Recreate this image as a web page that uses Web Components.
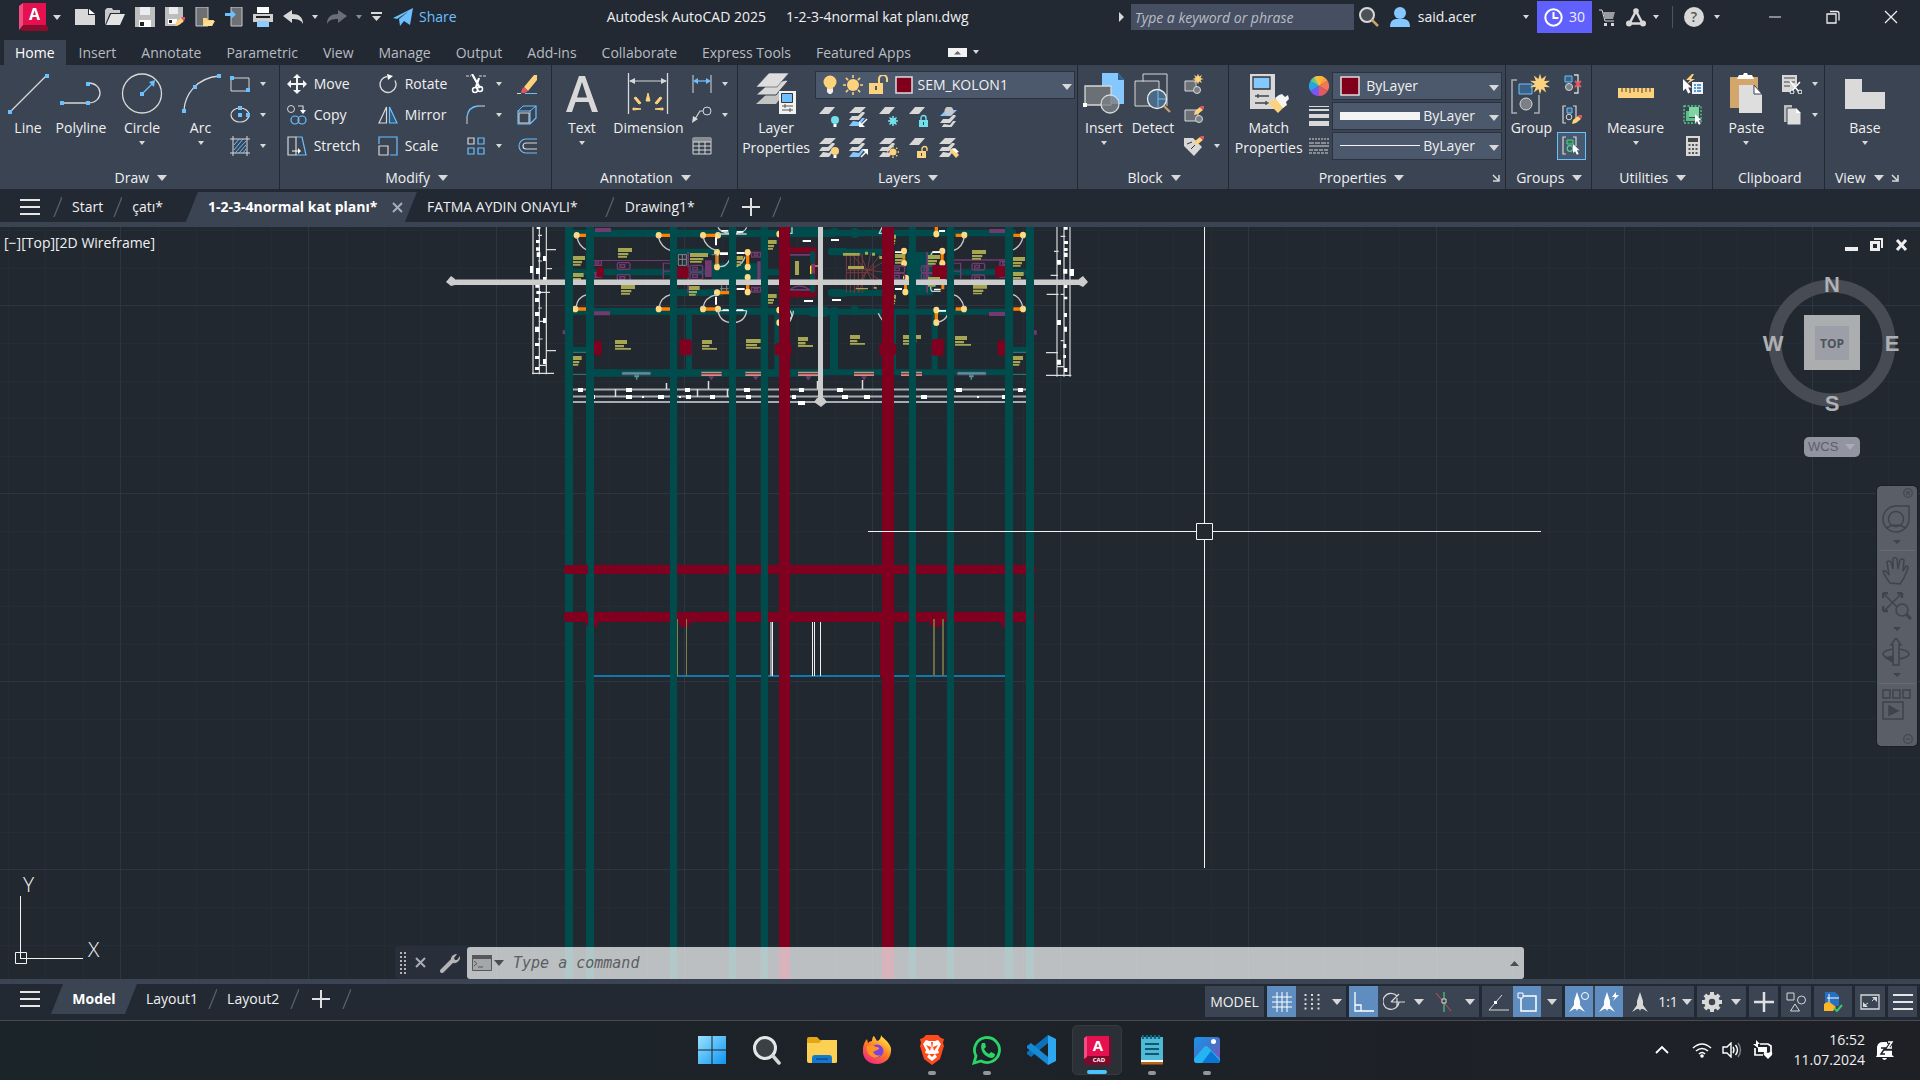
<!DOCTYPE html>
<html lang="en">
<head>
<meta charset="utf-8">
<title>Autodesk AutoCAD 2025</title>
<style>
html,body{margin:0;height:100%;background:#222933}
body{font:14px/20px "Open Sans","Noto Sans",sans-serif;color:#f0f0f0;overflow:hidden}
</style>
</head>
<body>
<cad-app></cad-app>
<script>
const W='#d8d8d8', B='#6cc0ff', Y='#fdd27c', R='#e8535d';

/* ---------- icon library: [width, height, markup] ---------- */
const sheet=(x,y,f)=>`<path d="M${x+6} ${y}h10l-6 7h-10z" fill="${f}"/>`;
const stack=(a=W,b=W,c=W)=>`<path d="M4 14l-4 5h10l6-8h-3l-3 4z" fill="${c}"/><path d="M3 8l-3 4h10l6-7-1-1h-2l-4 4z" fill="${b}" transform="translate(0 1)"/><path d="M6 0h11l-6 6H0z" fill="${a}"/>`;
const cursor=(x,y,s=1)=>`<path transform="translate(${x} ${y}) scale(${s})" d="M0 0v10l2.300-2 2 4 2-1-2-4h3z" fill="#fff"/>`;
const dot=(x,y)=>`<rect x="${x-2}" y="${y-2}" width="4" height="4" fill="${B}"/>`;
const pencil=(x,y)=>`<path transform="translate(${x} ${y})" d="M0 9l1-4 5-4 3 3-5 4z" fill="${Y}"/><path transform="translate(${x} ${y})" d="M6 1l1-1h3v2l-1 2z" fill="${R}"/>`;
const star=(cx,cy,r,n=8)=>{let p='';for(let i=0;i<n*2;i++){const a=Math.PI*i/n,q=i%2?r*.5:r;p+=(i?'L':'M')+(cx+q*Math.sin(a)).toFixed(1)+' '+(cy-q*Math.cos(a)).toFixed(1)}return `<path d="${p}z" fill="${Y}"/>`};
const rays=(cx,cy,a,b,n,c,w=1.500)=>{let p='';for(let i=0;i<n;i++){const t=2*Math.PI*i/n;p+=`M${(cx+a*Math.sin(t)).toFixed(1)} ${(cy-a*Math.cos(t)).toFixed(1)}L${(cx+b*Math.sin(t)).toFixed(1)} ${(cy-b*Math.cos(t)).toFixed(1)}`}return `<path d="${p}" stroke="${c}" stroke-width="${w}"/>`};
const lock=(x,y,c,open)=>`<g transform="translate(${x} ${y})"><path d="${open?'M5 5V3a2.500 2.500 0 0 1 5 0v2':'M2 5V3a2.500 2.500 0 0 1 5 0v2'}" fill="none" stroke="${c}" stroke-width="1.400"/><rect y="5" width="9" height="7" fill="${c}"/><rect x="4" y="7" width="1" height="3" fill="#3b4453"/></g>`;
const ICONS={
 logo:[30,28,`<path d="M1 3l4-3h23v22l2 2v4H5l-4-2z" fill="#8c0c2e"/><path d="M5 0h23v22H5z" fill="#e51050"/><path d="M1 3l4-3v22l-4 5z" fill="#f04e80"/><text x="16.500" y="17" text-anchor="middle" font-family="Open Sans" font-weight="700" font-size="16" fill="#fff">A</text>`],
 tri:[10,5,`<path d="M1 0h8L5 5z" fill="${W}"/>`],
 tris:[8,5,`<path d="M1 0h6L4 4z" fill="${W}"/>`],
 trid:[8,5,`<path d="M1 0h6L4 4z" fill="#888d94"/>`],
 trib:[10,6,`<path d="M0 0h10L5 6z" fill="${W}"/>`],
 trir:[6,10,`<path d="M0 0v10l5-5z" fill="${W}"/>`],
 launch:[8,8,`<path d="M1 1l5 5M7 1v6H1" stroke="${W}" stroke-width="1.500" fill="none"/>`],
 file:[20,18,`<path d="M0 1h13v6h7v10H0z" fill="${W}"/><path d="M14 1l6 5h-6z" fill="#fff"/>`],
 open:[20,18,`<path d="M0 17V2l2-2h5l1 2h7v3H5z" fill="#c8c8c8"/><path d="M6 6h14l-5 11H1z" fill="#e4e4e4"/>`],
 save:[20,20,`<path d="M0 0h20v20H0z" fill="#bdbdbd"/><path d="M5 0h10v8H5z" fill="#e9edf2"/><path d="M4 13h12v7H4z" fill="#fff"/><path d="M5 15h4v4H5z" fill="#222"/>`],
 saveas:[20,20,`<path d="M0 0h18v15l-6 4H0z" fill="#bdbdbd"/><path d="M4 0h9v7H4z" fill="#e9edf2"/><path d="M3 12h9v5H3z" fill="#fff"/><path d="M4 13h3v3H4z" fill="#222"/>${pencil(10,10)}`],
 mobopen:[20,20,`<path d="M1 0h12v19H1z" fill="#6d6f72" stroke="#c9c9c9"/><path d="M8 19v-8h4l1 2h6l-2 6z" fill="${Y}"/><path d="M8 19l3-5h9l-3 5z" fill="#ffdf96"/>`],
 mobsave:[18,20,`<path d="M6 0h11v19H6z" fill="#6d6f72" stroke="#c9c9c9"/><path d="M0 6h6V3l5 4.500-5 4.500V9H0z" fill="${B}"/>`],
 print:[20,20,`<path d="M4 0h12v6H4z" fill="#fff"/><path d="M0 7h20v8H0z" fill="#d0d0d0"/><path d="M3 9h14v2H3z" fill="#222"/><path d="M4 14h12v6H4z" fill="#8cccff"/>`],
 undo:[20,14,`<path d="M0 6l9-6v4c7 0 11 3 11 10-2-4-5-5-11-5v4z" fill="${W}"/>`],
 redo:[20,14,`<path d="M20 6l-9-6v4C4 4 0 7 0 14c2-4 5-5 11-5v4z" fill="#6a6f77"/>`],
 qmenu:[12,10,`<path d="M0 0h11v2H0zM1 4h9L5.500 9z" fill="${W}"/>`],
 share:[20,18,`<path d="M0 10L20 0l-3 17-6-4-4 5-1-7L16 3 4 11z" fill="${B}"/>`],
 search:[20,20,`<circle cx="8" cy="8" r="7" fill="#4c5158" stroke="${W}" stroke-width="2"/><path d="M13 13l6 6" stroke="#c9a26a" stroke-width="2.500"/>`],
 user:[20,20,`<circle cx="10" cy="6" r="6" fill="#84c8ff"/><path d="M0 20c0-6 3-8 7-8h6c4 0 7 2 7 8z" fill="#84c8ff"/>`],
 clock:[19,19,`<circle cx="9.500" cy="9.500" r="8.200" fill="none" stroke="#fff" stroke-width="2"/><path d="M9.500 4v6h5" fill="none" stroke="#fff" stroke-width="2"/>`],
 cart:[17,17,`<path d="M0 1h3l3 11h9" fill="none" stroke="${W}"/><path d="M4 3h12l-2 7H6z" fill="#9a9da1"/><path d="M5 14h3v3H5zM12 14h3v3h-3z" fill="${W}"/>`],
 delta:[20,19,`<path d="M10 3L3.500 15.500h13z" fill="none" stroke="${W}" stroke-width="2.500"/><circle cx="10" cy="3" r="2.800" fill="${W}"/><circle cx="3" cy="15.500" r="3" fill="${W}"/><circle cx="17" cy="15.500" r="3" fill="${W}"/>`],
 help:[20,20,`<circle cx="10" cy="10" r="10" fill="${W}"/><text x="10" y="15" text-anchor="middle" font-family="Open Sans" font-size="14" font-weight="600" fill="#555">?</text>`],
 min:[14,14,`<path d="M1 7h12" stroke="#eee"/>`],
 restore:[14,14,`<path d="M1 4h9v9H1z" fill="none" stroke="#eee" stroke-width="1.300"/><path d="M4 1.500h7q2 0 2 2v7" fill="none" stroke="#eee" stroke-width="1.300"/>`],
 close:[14,14,`<path d="M1 1l12 12M13 1L1 13" stroke="#eee" stroke-width="1.300"/>`],
 ribmin:[19,9,`<path d="M0 0h19v9H0z" fill="#f2f2f2"/><path d="M9.500 3l3.500 3.500H6z" fill="#666"/>`],
 line:[42,42,`<path d="M3 39L40 2" stroke="${W}" stroke-width="1.300"/>${dot(3,39)}${dot(40,3)}`],
 pline:[42,42,`<path d="M2 30h26c16 0 16-20 0-20" stroke="${W}" fill="none" stroke-width="1.300"/>${dot(2,30)}${dot(28,30)}${dot(28,11)}`],
 circle:[42,42,`<circle cx="21" cy="20.500" r="19.500" fill="none" stroke="${W}" stroke-width="1.300"/><path d="M21 21L33 9" stroke="${B}" stroke-width="1.300"/><path d="M34 7l-1 7-5-5z" fill="${B}"/>${dot(21,21)}`],
 arc:[42,42,`<path d="M4 37C5 22 16 5 39 3" fill="none" stroke="${W}" stroke-width="1.300"/>${dot(4,38)}${dot(15,14)}${dot(39,3)}`],
 rect:[20,20,`<path d="M1 4h18v13H1z" fill="none" stroke="${W}"/>${dot(2,4)}${dot(18,16)}`],
 ellipse:[20,20,`<ellipse cx="10" cy="10" rx="9" ry="7" fill="none" stroke="${W}" stroke-width="1.200"/>${dot(10,10)}${dot(10,3)}${dot(18,10)}`],
 hatch:[20,20,`<path d="M0 3h20M0 17h20M3 0v20M17 0v20" stroke="${W}"/><path d="M4 9l5-6M4 14l9-11M5 17L16 5M9 17l7-8M13 17l3-4" stroke="${B}"/>`],
 move:[20,20,`<path d="M10 0l4 4h-3v5h5V6l4 4-4 4v-3h-5v5h3l-4 4-4-4h3v-5H4v3l-4-4 4-4v3h5V4H6z" fill="#f4f4f4"/>`],
 copy:[20,20,`<circle cx="4" cy="4" r="3.500" fill="none" stroke="${W}"/><path d="M11 1h5v5" fill="none" stroke="${W}" stroke-width="1.200"/><path d="M13 5h6l-3 4z" fill="#fff"/><circle cx="8" cy="15" r="4" fill="none" stroke="${B}" stroke-width="1.200"/><circle cx="15" cy="15" r="4" fill="none" stroke="${B}" stroke-width="1.200"/>`],
 stretch:[20,20,`<path d="M1 1h8v18H1z" fill="none" stroke="${W}" stroke-width="1.200"/><path d="M9 1h6l4 18H9" fill="none" stroke="${B}" stroke-width="1.200"/><path d="M5 15h8" stroke="#fff"/><path d="M11 12l3 3-3 3z" fill="#fff"/>`],
 rotate:[20,20,`<path d="M9 2.500a8 8 0 1 0 8 4" fill="none" stroke="${W}" stroke-width="1.400"/><path d="M9 0l6 2-5 4z" fill="#fff"/>`],
 mirror:[20,20,`<path d="M8.500 2v16H1z" fill="none" stroke="${W}" stroke-width="1.200"/><path d="M11.500 2v16H19z" fill="#315a7c" stroke="${B}" stroke-width="1.200"/>`],
 scale:[20,20,`<path d="M1 8V1h18v18h-7" fill="none" stroke="${B}" stroke-width="1.200"/><path d="M1 10h9v9H1z" fill="none" stroke="${W}" stroke-width="1.200"/>`],
 trim:[20,20,`<path d="M0 2h5M13 2h7" stroke="${W}" stroke-dasharray="3 1"/><path d="M6 0l8 14M13 4l-3 9" stroke="#fff" stroke-width="2.200"/><circle cx="9" cy="16" r="2.500" fill="none" stroke="#fff" stroke-width="1.500"/><circle cx="14" cy="15" r="2.500" fill="none" stroke="#fff" stroke-width="1.500"/>`],
 fillet:[20,20,`<path d="M1 19v-7M12 1h7" stroke="${W}"/><path d="M1 12Q2 2 12 1" fill="none" stroke="${B}" stroke-width="1.300"/>`],
 array:[20,20,`<path d="M2 2h6v6H2z" fill="none" stroke="${W}" stroke-width="1.200"/><path d="M12 2h6v6h-6zM2 12h6v6H2zM12 12h6v6h-6z" fill="none" stroke="${B}" stroke-width="1.200"/>`],
 erase:[20,20,`<path d="M0 19.500h4" stroke="${W}"/><path d="M8 19.500h12" stroke="${B}"/><path d="M20 1v5l-9 11-4-4L17 1z" fill="${Y}"/><path d="M7 13l4 4-3 2H4l1-4z" fill="${R}"/>`],
 explode:[20,20,`<path d="M1 6h12v13H1zM6 1h13v12l-6 6" fill="none" stroke="${B}" stroke-width="1.200"/><path d="M1 6l5-5M13 6l6-5" stroke="${B}"/><path d="M2 8h10v10H2z" fill="none" stroke="${W}"/>`],
 offset:[20,20,`<path d="M20 3H9a7 7 0 0 0 0 14h11" fill="none" stroke="${B}" stroke-width="1.100"/><path d="M20 7H9a3 3 0 0 0 0 6h11" fill="none" stroke="${W}" stroke-width="1.200"/>`],
 text:[42,42,`<path d="M5 39L18 3h6l13 36h-6l-3.500-10h-13L11 39zM16 24.500h10L21 9z" fill="${W}"/>`],
 dim:[42,42,`<path d="M1.500 0v41M40.500 0v41" stroke="${W}" stroke-width="1.300"/><path d="M3 8h36" stroke="${W}"/><path d="M2 8l6-3v6zM40 8l-6-3v6z" fill="${W}"/><path d="M19 28l2-8 2 8zM12 31l-5-6 2-1 5 6zM30 31l5-6-2-1-5 6zM6 37v-2l8 1zM36 37v-2l-8 1z" fill="${Y}" stroke="${Y}"/>`],
 dlin:[20,20,`<path d="M1 1v18M19 1v18" stroke="${W}"/><path d="M3 7h14" stroke="${B}" stroke-width="1.300"/><path d="M1 7l5-3v6zM19 7l-5-3v6z" fill="${B}"/>`],
 leader:[20,20,`<circle cx="15" cy="6" r="4" fill="none" stroke="${W}"/><path d="M11 6H8L3 14" fill="none" stroke="${W}" stroke-width="1.200"/><path d="M0 18l1-7 5 3z" fill="${W}"/>`],
 table:[20,20,`<path d="M1 2h18v16H1z" fill="none" stroke="${W}"/><path d="M1 2h18v4H1z" fill="#888d94"/><path d="M1 6h18M1 10h18M1 14h18M7 6v12M13 6v12" stroke="${W}"/>`],
 layerp:[42,42,`<path d="M12 21L1 31h20l6-8-2-4h-7z" fill="#c4c4c4"/><path d="M12 12L1 22h20l12-14-2-1z" fill="${W}" stroke="#3b4453"/><path d="M14 0h20L22 14H1z" fill="#dedede" stroke="#3b4453" stroke-width=".6"/><path d="M24 18h17v23H24z" fill="#f2f2f2"/><path d="M26.500 20.500h11v9h-11z" fill="${B}" stroke="#333"/><path d="M27 33h11M27 37h11M30 31v4M35 35v4" stroke="#555"/>`],
 l1:[20,20,`${sheet(0,0,W)}<circle cx="16" cy="13" r="4" fill="#71e0ea"/><path d="M14.500 17h3v3h-3z" fill="#fff"/>`],
 l2:[20,20,`${stack(W,W,'#84c8ff')}<path d="M18 12l-6 6" stroke="#fff" stroke-width="1.400"/><path d="M10 20v-6l6 6z" fill="#fff"/>`],
 l3:[20,20,`${sheet(0,0,W)}${rays(14,14,0,5,8,'#71e0ea')}<circle cx="14" cy="14" r="3" fill="none" stroke="#71e0ea"/>`],
 l4:[20,20,`${sheet(0,0,W)}${lock(10,8,'#71e0ea')}`],
 l5:[20,20,`<g transform="translate(1 3)">${stack('#84c8ff')}</g><circle cx="10" cy="4" r="4.500" fill="#c9c9c9"/>`],
 l6:[20,20,`${stack()}<circle cx="16" cy="13" r="4" fill="${Y}"/><path d="M14.500 17h3v3h-3z" fill="#fff"/>`],
 l7:[20,20,`${stack(W,W,'#84c8ff')}<path d="M12 19l6-6" stroke="#fff" stroke-width="1.400"/><path d="M19 11v6l-6-6z" fill="#fff"/>`],
 l8:[20,20,`${stack()}<circle cx="14" cy="14" r="3.500" fill="${Y}"/>${rays(14,14,4.500,6,8,Y)}`],
 l9:[20,20,`${sheet(0,0,W)}${lock(8,8,Y,1)}`],
 l10:[20,20,`${stack()}<path d="M10 12l4-2 6 7-3 3z" fill="${Y}"/><path d="M16 10l4 4-3 1-4-4z" fill="#fff"/>`],
 bulb:[14,20,`<circle cx="7" cy="7" r="6.500" fill="${Y}"/><path d="M4 11h6v3H4z" fill="${Y}"/><path d="M4 14h6v3l-2 2H6l-2-2z" fill="#f0f0f0"/>`],
 sun:[20,20,`<circle cx="10" cy="10" r="6" fill="${Y}"/>${rays(10,10,7,10,8,Y)}`],
 unlock:[20,20,`<path d="M10 9V4a4 4 0 0 1 8 0v3" fill="none" stroke="${Y}" stroke-width="2"/><path d="M0 8h14v11H0z" fill="${Y}"/><path d="M6 11h2v4H6z" fill="#4c586c"/>`],
 sw:[18,18,`<path d="M1 1h16v16H1z" fill="#80001c" stroke="#dcdcdc" stroke-width="1.500"/>`],
 swb:[20,20,`<path d="M1 1h18v18H1z" fill="#80001c" stroke="#dcdcdc" stroke-width="1.500"/>`],
 insert:[42,42,`<path d="M19 0h16l6 7v24H19z" fill="#84c8ff"/><path d="M35 0l6 7h-6z" fill="#2d6290"/><path d="M2 13h26v19H2z" fill="#6b6f76" stroke="${W}" stroke-width="1.300"/><path d="M0 30h4v4H0z" fill="#fff"/><circle cx="27" cy="31" r="9" fill="#7b8086cc" stroke="${W}" stroke-width="1.300"/>`],
 detect:[42,42,`<path d="M11 9V1h24v32" fill="none" stroke="${W}"/><path d="M3 8h24v25H3z" fill="#6b6f7660" stroke="${W}"/><circle cx="25" cy="26" r="9.500" fill="#4a6a85" stroke="#eee" stroke-width="1.300"/><path d="M26 17v17M26 26h8" stroke="${B}"/><path d="M32 33l6 6" stroke="#c9a26a" stroke-width="2.200"/>`],
 bnew:[20,20,`<path d="M1 7h11v10H1z" fill="#6b6f76" stroke="${W}"/><circle cx="13" cy="16" r="3.500" fill="#7b8086" stroke="${W}"/>${star(14,5,5.500)}`],
 bedit:[20,20,`<path d="M1 5h13v11H1z" fill="#6b6f76" stroke="${W}"/><circle cx="15" cy="14" r="3.500" fill="#7b8086" stroke="${W}"/>${pencil(10,1)}`],
 battr:[20,20,`<path d="M0 2h9l9 9-8 9L0 10z" fill="${W}"/><path d="M3 8l5-2M7 13l4-4" stroke="#333"/>${pencil(10,0)}`],
 match:[42,42,`<path d="M2 1h25v35H2z" fill="${W}"/><path d="M5 4h17v12H5z" fill="#84c8ff" stroke="#333" stroke-width="1.300"/><path d="M7 23h14M7 30h14M10 21v4M18 28v4" stroke="#444" stroke-width="1.300"/><path d="M20 30l9-5 7 9-6 6z" fill="${Y}"/><path d="M27 25l4-3 3-1 3 3 3-2 1 4-3 3 1 3-4 3z" fill="#f4f4f4"/>`],
 wheel:[20,20,`<path d="M10 10V0a10 10 0 0 1 8.700 5z" fill="#ff9a3d"/><path d="M10 10l8.700-5a10 10 0 0 1 0 10z" fill="#f2765a"/><path d="M10 10l8.700 5A10 10 0 0 1 10 20z" fill="#e05a60"/><path d="M10 10v10a10 10 0 0 1-8.700-5z" fill="#7b55f5"/><path d="M10 10l-8.700 5a10 10 0 0 1 0-10z" fill="#28a4e4"/><path d="M10 10L1.300 5A10 10 0 0 1 10 0z" fill="#5ccb8c"/><path d="M10 10L5 1.300A10 10 0 0 1 15 1.300z" fill="#fdbb3c"/>`],
 lwt:[20,20,`<path d="M0 0h20v1H0zM0 3h20v2H0zM0 8h20v4H0zM0 15h20v5H0z" fill="${W}"/>`],
 ltype:[20,20,`<path d="M0 3h20" stroke="${W}" stroke-dasharray="2 1"/><path d="M0 7h20" stroke="${W}" stroke-dasharray="5 1"/><path d="M0 10h20" stroke="${W}"/><path d="M0 14h20" stroke="${W}" stroke-dasharray="4 1"/><path d="M0 17h20" stroke="${W}" stroke-dasharray="3 1"/>`],
 lw:[80,8,`<path d="M0 0h80v8H0z" fill="#f4f4f4"/>`],
 lt:[80,2,`<path d="M0 0h80v1H0z" fill="#f4f4f4"/>`],
 group:[42,42,`<path d="M7 7H2v33h5M24 40h5V22" fill="none" stroke="#a9adb3" stroke-width="1.500"/><path d="M9 11h13v10H9z" fill="#3a6186" stroke="${B}"/><circle cx="16" cy="31" r="6" fill="#7b8086" stroke="${W}"/>${star(30,11,10.500,10)}`],
 ungroup:[20,20,`<path d="M3 2h7v6H3z" fill="#3a6186" stroke="${B}"/><circle cx="7" cy="13" r="3.500" fill="#7b8086" stroke="${W}"/><path d="M12 1h4v18h-4" fill="none" stroke="${W}" stroke-width="1.300"/><path d="M13 7l6 6M19 7l-6 6" stroke="${R}" stroke-width="2"/>`],
 gedit:[20,20,`<path d="M4 1H1v17h3M11 1h3v12" fill="none" stroke="${W}" stroke-width="1.200"/><path d="M5 3h5v5H5z" fill="#3a6186" stroke="${B}"/><circle cx="7" cy="12" r="2.800" fill="none" stroke="${W}"/>${pencil(10,10)}`],
 gsel:[20,20,`<path d="M5 1H2v17h3M12 1h3v9" fill="none" stroke="${W}" stroke-width="1.200"/><path d="M6 4h6v4H6z" fill="#2d7a50" stroke="#5ccb8c"/><circle cx="9" cy="12.500" r="2.800" fill="none" stroke="#5ccb8c" stroke-width="1.300"/>${cursor(12,8,.9)}`],
 measure:[42,42,`<path d="M3 15h36v10H3z" fill="${Y}"/><path d="M7 15v4M11 15v4M15 15v5M19 15v4M23 15v4M27 15v5M31 15v4M35 15v4" stroke="#4a4434"/>`],
 quick:[20,20,`<path d="M9 0L3 6h4L4 10l8-5H8l3-5z" fill="${Y}"/><path d="M9 8h11v12H9z" fill="#f2f2f2"/><path d="M11 11h2M14 11h4M11 14h2M14 14h4M11 17h2M14 17h4" stroke="#1f7fd0" stroke-width="1.300"/>${cursor(0,5,1.200)}`],
 qsel:[20,20,`<path d="M1 1h17v17H1z" fill="none" stroke="#5ccb8c" stroke-dasharray="2 1.500" stroke-width="1.300"/><path d="M6 2h10v10H6z" fill="#80d4a4"/><path d="M3 6h3v7h7v3H3z" fill="#5cbf88"/>${cursor(12,9,.9)}`],
 calc:[16,20,`<path d="M1 0h14v20H1z" fill="${W}"/><path d="M3 2h10v4H3z" fill="#444"/><path d="M3.500 9h9M3.500 13h9M3.500 17h9" stroke="#555" stroke-width="2" stroke-dasharray="2 1.500"/>`],
 paste:[42,42,`<path d="M5 4h28v31H5z" fill="#d3a66c"/><path d="M12 6l2-4h4l1-2h3l1 2h4l2 4z" fill="#fff"/><path d="M14 12h15l8 9v19H14z" fill="#dedede"/><path d="M29 12l8 9h-8z" fill="#fff" stroke="#3b4453"/>`],
 cutc:[20,20,`<path d="M0 1h15v10l-6 7H0z" fill="${W}"/><path d="M2 4h11M2 8h11M2 12h6" stroke="#444"/><path d="M8 7l9 11M18 8L9 18" stroke="#fff" stroke-width="1.500"/><circle cx="10" cy="18" r="2" fill="#3b4453" stroke="#fff"/><circle cx="18" cy="18" r="2" fill="#3b4453" stroke="#fff"/>`],
 copyc:[20,20,`<path d="M2 0h8v17H2z" fill="#bcbcbc"/><path d="M5 3h9l5 5v12H5z" fill="#dedede" stroke="#3b4453"/><path d="M14 3l5 5h-5z" fill="#fff"/>`],
 base:[42,42,`<path d="M1 6h17v13h23v17H1z" fill="#dadada"/>`],
 burger:[20,16,`<path d="M0 1h20M0 8h20M0 15h20" stroke="#e6e6e6" stroke-width="2"/>`],
 slash:[9,20,`<path d="M1 20L9 0" stroke="#56606e" stroke-width="1.300"/>`],
 plus:[18,18,`<path d="M9 0v18M0 9h18" stroke="#e0e0e0" stroke-width="2"/>`],
 x:[11,11,`<path d="M1 1l9 9M10 1l-9 9" stroke="#a8adb4" stroke-width="2"/>`],
 grip:[6,22,`<path d="M1 0v22M5 0v22" stroke="#b4b4b4" stroke-width="2" stroke-dasharray="2 2"/>`],
 wrench:[20,20,`<path d="M2 18L12 8" stroke="#b4b4b4" stroke-width="4" stroke-linecap="round"/><path d="M11 9c-1-5 2-8 6-8l-3 4 1 2h2l3-4c1 4-3 8-7 7z" fill="#b4b4b4"/>`],
 prompt:[20,16,`<path d="M.5.500h19v15H.5z" fill="#a4a6a8" stroke="#55585c"/><path d="M0 0h20v4H0z" fill="#55585c"/><path d="M2 6l3 2.500L2 11M6 12h5" stroke="#55585c" fill="none"/>`],
 tridark:[10,6,`<path d="M0 0h10L5 6z" fill="#4a4d51"/>`],
 updark:[9,5,`<path d="M0 5h9L4.500 0z" fill="#4a4d51"/>`],
 grid:[20,20,`<path d="M0 5h20M0 10h20M0 15h20M5 0v20M10 0v20M15 0v20" stroke="#fff"/>`],
 snap:[16,16,`<path d="M1.500 0v16M8 0v16M14.500 0v16" stroke="${W}" stroke-width="2" stroke-dasharray="2 2.500"/>`],
 ortho:[20,20,`<path d="M1 0v19h19M1 13h6v6" fill="none" stroke="#fff" stroke-width="1.300"/>`],
 polar:[22,20,`<path d="M14 4a8 8 0 1 0 2 6M8 10h14M8 10l8-8M14 6v8" fill="none" stroke="${W}" stroke-width="1.200"/>`],
 iso:[18,20,`<path d="M1 1l15 18" stroke="#c9545c"/><path d="M9 0v20" stroke="#4fae72" stroke-width="1.500"/><path d="M7 7h4v4H7z" fill="#3b4453" stroke="${W}"/>`],
 track:[22,20,`<path d="M15 3L2 18h20" fill="none" stroke="${W}"/><path d="M7 9h3v3H7z" fill="#fff"/>`],
 osnap:[20,20,`<path d="M3 4h16v15H4V4" fill="none" stroke="#fff" stroke-width="1.500"/><path d="M1 1h5v5H1z" fill="#5f8dc0" stroke="#fff"/>`],
 an1:[22,20,`<path d="M9 0l3 9v4l5 7-5-3h-2l-1 2-1-2H6l-5 3 5-7V9z" fill="#fff"/><circle cx="17" cy="4" r="3.500" fill="none" stroke="#fff"/>`],
 an2:[22,20,`<path d="M9 0l3 9v4l5 7-5-3h-2l-1 2-1-2H6l-5 3 5-7V9z" fill="#fff"/><path d="M18 0l-4 5h3l-2 4 6-6h-3z" fill="#fff"/>`],
 an3:[18,20,`<path d="M9 0l3 9v4l5 7-5-3h-2l-1 2-1-2H6l-5 3 5-7V9z" fill="${W}"/>`],
 gear:[20,20,`<circle cx="10" cy="10" r="5.500" fill="none" stroke="${W}" stroke-width="4.500"/>${rays(10,10,7,10,8,W,4)}`],
 cross:[20,20,`<path d="M10 0v20M0 10h20" stroke="#e0e0e0" stroke-width="2.500"/>`],
 shapes:[20,20,`<path d="M1 1h7v7H1zM9 12l4.500 7h-9z" fill="none" stroke="${W}"/><circle cx="15.500" cy="8" r="4" fill="none" stroke="${W}"/>`],
 perf:[20,20,`<path d="M2 0h10l4 4v10H2z" fill="#2570c0"/><path d="M4 6h12M6 2v8" stroke="#fff"/><path d="M1 12q5-4 8 0l4 3-3 4H1z" fill="#fcb824"/><path d="M11 16l3 3 5-6" fill="none" stroke="#3dc46c" stroke-width="2"/>`],
 full:[20,16,`<path d="M1 1h18v14H1z" fill="none" stroke="${W}" stroke-width="1.300"/><path d="M12 3h5v5zM3 13h5l-5-5z" fill="${W}"/><path d="M12 7l3-3M5 11l3-2" stroke="${W}"/>`],
 win:[30,30,`<defs><linearGradient id="w" x2="1" y2="1"><stop stop-color="#9be2ff"/><stop offset="1" stop-color="#0d95f0"/></linearGradient></defs><path d="M1 1h13.500v13.500H1zM15.500 1H29v13.500H15.500zM1 15.500h13.500V29H1zM15.500 15.500H29V29H15.500z" fill="url(#w)"/>`],
 tsearch:[30,30,`<circle cx="13" cy="13" r="10.500" fill="#3b4044" stroke="#e4e6e8" stroke-width="3"/><path d="M21 21l6 7" stroke="#d4d6d8" stroke-width="3.500" stroke-linecap="round"/>`],
 folder:[30,30,`<path d="M0 4q0-2 2-2h8l3 3h15v6H0z" fill="#e6a514"/><path d="M0 8h12l3-3h15v22q0 1-2 1H2q-2 0-2-2z" fill="#fcd053"/><path d="M5 28v-5q0-3 3-3h14q3 0 3 3v5z" fill="#1479cc"/><path d="M9 24h12" stroke="#0c4c94" stroke-width="1.500"/>`],
 fox:[30,30,`<defs><linearGradient id="f" x1=".8" x2=".2" y2="1"><stop stop-color="#fff04a"/><stop offset=".5" stop-color="#ff7a22"/><stop offset="1" stop-color="#f0208a"/></linearGradient></defs><path d="M19 0c1 3 8 6 10 13 1 9-5 16-14 16S0 23 1 14c0-4 2-8 4-10l1 4q2-2 4-2c0-2 1-5 2-5l3 5q4-1 4-6z" fill="url(#f)"/><circle cx="15" cy="16" r="6.500" fill="#7b42e0"/><path d="M5 11q6-2 9 1 4 0 3 2l-6 3q3 5 8 3c-6 6-16 0-14-9z" fill="#ff9226"/>`],
 brave:[30,30,`<path d="M9 0h12l3 3 3 1-1 4 1 3-4 13-8 6-8-6L3 11l1-3-1-4 3-1z" fill="#ff4a1c"/><path d="M9 5l3 1h6l3-1 3 4-3 6 1 3-4 1 2 3-5 4-5-4 2-3-4-1 1-3-3-6z" fill="#fff"/><path d="M9 10l5 2-1 4zM21 10l-5 2 1 4zM12 19l3 3 3-3zM14 7h2l-1 8z" fill="#ff4a1c"/>`],
 wa:[30,30,`<path d="M2 28l2-7a12.500 12.500 0 1 1 5 5z" fill="#1c2328" stroke="#2bd466" stroke-width="2.800"/><path d="M10 8h3l1 4-2 2q2 4 5 5l2-2 4 2q0 4-4 4C12 22 7 14 10 8z" fill="#2bd466"/>`],
 code:[30,30,`<path d="M21 0l8 4v22l-8 4z" fill="#2da8f0"/><path d="M21 0v8L4 22l-4-3v-2z" fill="#0a72b8"/><path d="M0 11l4-3 17 14v8L0 13z" fill="#1688d4"/>`],
 acad:[30,30,`<path d="M2 3l3-2h22l2 3v26H5l-3-3z" fill="#7e0a2b"/><path d="M5 1h22v20H5z" fill="#e51050"/><path d="M2 3l3-2v21l-3 2z" fill="#f04e80"/><text x="16" y="16" text-anchor="middle" font-family="Open Sans" font-weight="700" font-size="15" fill="#fff">A</text><text x="17" y="27" text-anchor="middle" font-family="Open Sans" font-weight="700" font-size="6" fill="#fff">CAD</text>`],
 note:[30,30,`<path d="M4 2h22v26H4z" fill="#4fb9d6"/><path d="M4 25h22v2H4z" fill="#fff"/><path d="M4 27h22v2.500H4z" fill="#b8641e"/><path d="M8 9h14M8 14h14M8 19h14" stroke="#0f5670" stroke-width="1.800"/><path d="M6 0v4M10 0v4M14 0v4M18 0v4M22 0v4" stroke="#0c6a88" stroke-width="2.200"/>`],
 photo:[30,30,`<defs><linearGradient id="p" x2="1" y2="1"><stop stop-color="#1296ea"/><stop offset=".6" stop-color="#4d6ec6"/><stop offset="1" stop-color="#8d4ab8"/></linearGradient></defs><rect x="2" y="2" width="26" height="26" rx="3" fill="url(#p)"/><path d="M2 24l10-12q2-2 4 0l12 12v1q0 3-3 3H5q-3 0-3-3z" fill="#24b4f4"/><path d="M10 28l9-12 9 10q-1 2-3 2z" fill="#0a76d4"/><circle cx="21.500" cy="6.500" r="2.500" fill="#fff"/>`],
 chev:[14,10,`<path d="M1 8l6-6 6 6" fill="none" stroke="#fff" stroke-width="1.800"/>`],
 wifi:[20,16,`<path d="M1 6q9-8 18 0M4 9q6-5 12 0M7 12q3-3 6 0" fill="none" stroke="#fff" stroke-width="1.600"/><circle cx="10" cy="14" r="1.800" fill="#fff"/>`],
 vol:[20,16,`<path d="M1 5h4l4-4v14l-4-4H1z" fill="none" stroke="#fff" stroke-width="1.400"/><path d="M11 5q2 3 0 6M13.500 3q4 5 0 10" fill="none" stroke="#fff" stroke-width="1.400"/><path d="M16 1q5 7 0 14" fill="none" stroke="#7b8085" stroke-width="1.400"/>`],
 batt:[22,20,`<path d="M8 4h8l3 2v6M3 8v7h8" fill="none" stroke="#fff" stroke-width="1.700"/><path d="M6 7h9v5H6z" fill="#fff"/><path d="M4 0v4H1l5 4V4h2z" fill="#fff"/><path d="M16 19l-4-4q-1-4 2-3l2 1 2-1q3-1 2 3z" fill="#fff"/>`],
 bell:[20,20,`<path d="M2 15V7q1-5 6-5h4q5 1 5 5v8l2 2H1z" fill="#fff"/><path d="M7 18h5q-1 2-2.500 2T7 18z" fill="#fff"/><path d="M6 8h4l-4 6h4" stroke="#1d2228" fill="none" stroke-width="1.500"/><path d="M12 2h5l-5 7h5" stroke="#1d2228" fill="none" stroke-width="3.500"/><path d="M13 2h4l-4 6h4" stroke="#fff" fill="none" stroke-width="1.500"/>`],
};

const define=(name,css,html)=>customElements.define(name,class extends HTMLElement{
  constructor(){super();this.attachShadow({mode:'open'})}
  connectedCallback(){
    if(this.shadowRoot.childNodes.length)return;
    const t=document.createElement('template');
    t.innerHTML=`<style>:host{display:block;box-sizing:border-box}*{box-sizing:border-box}button,input,select{font:inherit;color:inherit;background:none;border:0;padding:0;margin:0}button{white-space:nowrap}${css}</style>${typeof html==='function'?html(this):html}`;
    this.shadowRoot.append(t.content.cloneNode(true));
  }
});

define('cad-icon',`:host{display:inline-flex;flex:none}svg{display:block}`,el=>{
  const [w,h,m]=ICONS[el.getAttribute('name')];
  return `<svg width="${w}" height="${h}" viewBox="0 0 ${w} ${h}" fill="none" aria-hidden="true">${m}</svg>`;
});
const I=n=>`<cad-icon name="${n}"></cad-icon>`;
const btn=(n,label,c='')=>`<button class="${c}" aria-label="${label}">${I(n)}</button>`;

/* ---------- title bar ---------- */
define('title-bar',`:host{display:flex;align-items:center;height:34px;margin-bottom:6px}
.left,.right{display:flex;align-items:center}
.left{padding-left:18px}
.left button{display:flex;align-items:center;height:28px}
.more{margin-left:4px}
.q{display:flex;gap:10px;margin-left:13px;align-items:center}
.q .d{margin:0 -2px}
.share{gap:6px;color:#6cc0ff}
h1{flex:1;display:flex;justify-content:center;gap:20px;margin:0;font-size:14px;font-weight:400;white-space:nowrap}
.right button{display:flex;align-items:center;justify-content:center;height:32px}
input{width:223px;height:26px;margin:0 5px 0 6px;padding:0 4px;background:#464f62;font-style:italic;outline:0}
input::placeholder{color:#b9bdc4;opacity:1}
.user{gap:8px;margin-left:11px}
.acct{margin-left:46px}
.days{gap:6px;width:55px;background:#6060ff;margin:0 7px}
.apps{margin:0 6px 0 10px}
.sep{width:1px;height:22px;background:#4b535e;margin:0 11px 0 12px}
.hl{margin:0 25px 0 9px}
.w{width:58px}`,
`<div class="left">${btn('logo','Application menu')}${btn('tri','More','more')}
<div class="q">${btn('file','New')}${btn('open','Open')}${btn('save','Save')}${btn('saveas','Save as')}${btn('mobopen','Open from mobile')}${btn('mobsave','Save to mobile')}${btn('print','Plot')}${btn('undo','Undo')}${btn('tris','Undo list','d')}${btn('redo','Redo')}${btn('trid','Redo list','d')}${btn('qmenu','Customize')}<button class="share">${I('share')}Share</button></div></div>
<h1><span>Autodesk AutoCAD 2025</span><span>1-2-3-4normal kat planı.dwg</span></h1>
<div class="right">${btn('trir','Collapse')}<input aria-label="Search" placeholder="Type a keyword or phrase">${btn('search','Search')}<button class="user">${I('user')}said.acer</button>${btn('tris','Account','acct')}<button class="days">${I('clock')}30</button>${btn('cart','Store')}${btn('delta','Apps','apps')}${btn('tris','Apps list')}<span class="sep"></span>${btn('help','Help')}${btn('tris','Help list','hl')}${btn('min','Minimize','w')}${btn('restore','Restore','w')}${btn('close','Close','w')}</div>`);

/* ---------- ribbon tabs ---------- */
define('ribbon-tabs',`:host{display:flex;align-items:center;height:25px;padding-left:4px;gap:1px}
button{height:25px;padding:0 12px;color:#b8bcc2}
.on{background:#3b4453;color:#fff;padding:0 11px}
.i{display:flex;align-items:center;padding:0;margin-left:24px}.i+.i{margin-left:4px}`,
['Home','Insert','Annotate','Parametric','View','Manage','Output','Add-ins','Collaborate','Express Tools','Featured Apps'].map((t,i)=>`<button${i?'':' class="on"'}>${t}</button>`).join('')+btn('ribmin','Minimize ribbon','i')+btn('tris','Ribbon list','i'));

/* ---------- ribbon parts ---------- */
define('ribbon-panel',`:host{display:flex;flex-direction:column;min-width:0;border-right:1px solid #222933}
:host(:last-of-type){border:0}
.b{flex:1;display:flex;min-height:0}
.t{display:flex;align-items:center;height:22px;white-space:nowrap}
.n{flex:1;display:flex;align-items:center;justify-content:center;gap:8px;padding-left:2px}
.l{display:flex;padding-right:5px}`,
el=>`<div class="b"><slot></slot></div><div class="t"><span class="n">${el.getAttribute('label')}${el.hasAttribute('plain')?'':I('trib')}</span>${el.hasAttribute('launch')?btn('launch','Settings','l'):''}</div>`);

define('tool-big',`:host{flex:none}
button{display:flex;flex-direction:column;align-items:center;width:100%;padding-top:8px;line-height:20px;white-space:nowrap;text-align:center}
.i{height:45px;display:flex}.a{height:10px;display:flex;align-items:center;justify-content:center}`,
el=>`<button><span class="i">${I(el.getAttribute('icon'))}</span><span><slot></slot></span>${el.hasAttribute('drop')?`<span class="a">${I('tris')}</span>`:''}</button>`);

define('tool-small',`:host{display:flex;align-items:center;height:30px}
button{display:flex;align-items:center;gap:7px;height:28px}
.d{margin-left:9px}
:host([on]) button{width:29px;justify-content:center;border:1px solid #6cc0ff;background:#46596e;margin-left:-5px}`,
el=>`<button aria-label="${el.getAttribute('tip')||el.textContent}">${I(el.getAttribute('icon'))}<slot></slot></button>${el.hasAttribute('drop')?btn('tris',(el.getAttribute('tip')||'')+' list','d'):''}`);

define('tool-col',`:host{display:flex;flex-direction:column;gap:1px;padding-top:4px;flex:none}`,`<slot></slot>`);

define('cad-combo',`:host{display:grid;align-items:center;height:28px;background:#4c586c;border:1px solid #2a323d}
select,.o{grid-area:1/1;width:100%;min-width:0}
select{appearance:none;height:26px;outline:0;padding-left:var(--pad,33px)}
.o{display:flex;align-items:center;pointer-events:none;gap:6px;padding:0 2px 0 7px}
.e{margin-left:auto}`,
el=>`<select aria-label="${el.getAttribute('tip')}"><option>${el.getAttribute('value')}</option></select><div class="o">${el.getAttribute('icons').split(' ').map(I).join('')}<span class="e">${I('trib')}</span></div>`);

const small=(icon,tip,extra='')=>`<tool-small icon="${icon}" tip="${tip}" ${extra}></tool-small>`;
define('cad-ribbon',`:host{display:flex;height:124px;background:#3b4453;padding-left:1px}
.lay{display:flex;flex-direction:column;padding-top:6px;width:260px}
.row{display:flex;gap:10px;padding-left:4px;height:31px;align-items:center}
.row:nth-child(2){margin-top:2px}
.pr{display:grid;grid-template-columns:20px 1fr;gap:2px 3px;padding:7px 3px 0 1px;flex:1;align-items:center;min-width:0;align-content:start}`,
`<ribbon-panel label="Draw" style="flex:279 1 0">
<tool-big icon="line" style="width:54px">Line</tool-big><tool-big icon="pline" style="width:52px">Polyline</tool-big><tool-big icon="circle" drop style="width:70px">Circle</tool-big><tool-big icon="arc" drop style="width:47px">Arc</tool-big>
<tool-col style="padding-left:6px">${small('rect','Rectangle','drop')}${small('ellipse','Ellipse','drop')}${small('hatch','Hatch','drop')}</tool-col></ribbon-panel>
<ribbon-panel label="Modify" style="flex:273 1 0">
<tool-col style="padding-left:7px;width:98px"><tool-small icon="move">Move</tool-small><tool-small icon="copy">Copy</tool-small><tool-small icon="stretch">Stretch</tool-small></tool-col>
<tool-col style="width:88px"><tool-small icon="rotate">Rotate</tool-small><tool-small icon="mirror">Mirror</tool-small><tool-small icon="scale">Scale</tool-small></tool-col>
<tool-col style="width:51px">${small('trim','Trim','drop')}${small('fillet','Fillet','drop')}${small('array','Array','drop')}</tool-col>
<tool-col>${small('erase','Erase')}${small('explode','Explode')}${small('offset','Offset')}</tool-col></ribbon-panel>
<ribbon-panel label="Annotation" style="flex:185 1 0">
<tool-big icon="text" drop style="width:59px">Text</tool-big><tool-big icon="dim" style="width:74px">Dimension</tool-big>
<tool-col style="padding-left:7px">${small('dlin','Linear','drop')}${small('leader','Leader','drop')}${small('table','Table')}</tool-col></ribbon-panel>
<ribbon-panel label="Layers" style="flex:341 1 0">
<tool-big icon="layerp" style="width:77px">Layer<br>Properties</tool-big>
<div class="lay"><cad-combo tip="Layer" value="SEM_KOLON1" icons="bulb sun unlock sw" style="--pad:102px"></cad-combo>
<div class="row">${[1,2,3,4,5].map(n=>small('l'+n,'Layer tool '+n)).join('')}</div><div class="row">${[6,7,8,9,10].map(n=>small('l'+n,'Layer tool '+n)).join('')}</div></div></ribbon-panel>
<ribbon-panel label="Block" style="flex:151 1 0">
<tool-big icon="insert" drop style="width:52px">Insert</tool-big><tool-big icon="detect" style="width:46px">Detect</tool-big>
<tool-col style="padding-left:8px">${small('bnew','Create')}${small('bedit','Edit')}${small('battr','Attributes','drop')}</tool-col></ribbon-panel>
<ribbon-panel label="Properties" launch style="flex:277 1 0">
<tool-big icon="match" style="width:79px">Match<br>Properties</tool-big>
<div class="pr">${I('wheel')}<cad-combo tip="Color" value="ByLayer" icons="swb"></cad-combo>${I('lwt')}<cad-combo tip="Lineweight" value="ByLayer" icons="lw" style="--pad:90px"></cad-combo>${I('ltype')}<cad-combo tip="Linetype" value="ByLayer" icons="lt" style="--pad:90px"></cad-combo></div></ribbon-panel>
<ribbon-panel label="Groups" style="flex:85 1 0">
<tool-big icon="group" style="width:51px">Group</tool-big>
<tool-col style="padding-left:5px">${small('ungroup','Ungroup')}${small('gedit','Group edit')}${small('gsel','Group selection','on')}</tool-col></ribbon-panel>
<ribbon-panel label="Utilities" style="flex:121 1 0">
<tool-big icon="measure" drop style="width:88px">Measure</tool-big>
<tool-col style="padding-left:3px">${small('quick','Quick select')}${small('qsel','Select all')}<tool-small icon="calc" tip="Calculator" style="padding-left:2px"></tool-small></tool-col></ribbon-panel>
<ribbon-panel label="Clipboard" plain style="flex:112 1 0">
<tool-big icon="paste" drop style="width:67px">Paste</tool-big>
<tool-col style="padding-left:2px">${small('cutc','Cut','drop')}${small('copyc','Copy clip','drop')}</tool-col></ribbon-panel>
<ribbon-panel label="View" launch style="flex:79 1 0"><tool-big icon="base" drop style="width:79px">Base</tool-big></ribbon-panel>
<div style="flex:16 1 0"></div>`);

/* ---------- slanted tabs ---------- */
const slant=`:host{display:flex;align-items:center}
button{display:flex;align-items:center;height:100%}
.on{font-weight:700;gap:15px;background:#3b4453;color:#fff;height:100%}`;
define('file-tabs',slant+`:host{height:33px;padding:3px 0 0 20px}
.on{clip-path:polygon(12px 0,100% 0,calc(100% - 12px) 100%,0 100%);width:231px;padding-left:22px;margin:0 10px 0 23px}
.a{margin:0 10px 0 13px}.b{margin:0 10px}.c{margin:0 11px 0 27px}.d{margin:0 13px 0 25px}.e{margin-left:12px}`,
`${btn('burger','Menu')}<cad-icon name="slash" class="a"></cad-icon><button>Start</button><cad-icon name="slash" class="b"></cad-icon><button>çatı*</button><button class="on">1-2-3-4normal kat planı*${I('x')}</button><button>FATMA AYDIN ONAYLI*</button><cad-icon name="slash" class="c"></cad-icon><button>Drawing1*</button><cad-icon name="slash" class="d"></cad-icon>${btn('plus','New tab')}<cad-icon name="slash" class="e"></cad-icon>`);

define('layout-tabs',slant+`:host{height:30px;padding-left:20px}
.on{clip-path:polygon(12px 0,100% 0,calc(100% - 12px) 100%,0 100%);width:86px;justify-content:center;margin:0 9px 0 11px}
.a{margin:0 10px}.b{margin:0 13px 0 11px}.c{margin-left:12px}`,
`${btn('burger','Menu')}<button class="on">Model</button><button>Layout1</button><cad-icon name="slash" class="a"></cad-icon><button>Layout2</button><cad-icon name="slash" class="b"></cad-icon>${btn('plus','New layout')}<cad-icon name="slash" class="c"></cad-icon>`);

/* ---------- model space drawing ---------- */
function drawing(){
  const T='#004c4c',C='#80001f',O='#a5a552',P='#743a70',D='#ffda83',G='#ff7f00';
  const rs=(c,l)=>`<path fill="${c}" d="${l.map(([x,y,w,h])=>`M${x} ${y}h${w}v${h}h${-w}z`).join('')}"/>`;
  const rr=(c,l)=>l.map(([x,y,w,h,r=6])=>`<rect x="${x}" y="${y}" width="${w}" height="${h}" rx="${r}" fill="${c}"/>`).join('');
  const dots=l=>l.map(([x,y])=>`<ellipse cx="${x}" cy="${y}" rx="9" ry="10" fill="${D}"/>`).join('');
  const door=l=>`<path d="${l.join('')}" fill="none" stroke="#c9c9c9" stroke-width="4"/>`;
  /* room label: three stacked lines of text, third one optionally longer */
  const note=l=>rs(O,l.flatMap(([x,y,w,w3])=>[[x,y,w,12],[x,y+15,w*.75|0,7],[x,y+24,w3||(w*.65|0),5]]));
  let minor='',major='';
  for(let k=-4;k<52;k++){const x=Math.round(120.400+37.600*k),y=Math.round(305.400+37.600*k);
    if(k%5){minor+=`M${x}.5 227V979`;if(y>227&&y<979)minor+=`M0 ${y}.5H1920`}
    else{major+=`M${x}.5 227V979`;if(y>227&&y<979)major+=`M0 ${y}.5H1920`}}
  const fixture=(x,y)=>`<g fill="none" stroke="${P}" stroke-width="4"><rect x="${x}" y="${y}" width="38" height="20" rx="5"/><rect x="${x+8}" y="${y+6}" width="14" height="8"/></g>`;
  const bath=(x,y)=>`<g fill="none" stroke="${P}" stroke-width="4"><rect x="${x}" y="${y}" width="26" height="14"/><rect x="${x+8}" y="${y+4}" width="10" height="6"/></g>`;
  const win=(x,w)=>rs('#e8847c',[[x,455,w,5],[x,463,w,5]])+rs(P,[[x+w/2-7|0,469,14,5],[x+w/2-3|0,474,6,5]]);
  const left=`<g transform="translate(440 220) scale(.33333)">
  ${rs(T,[[385,29,800,22],[385,148,660,18],[385,264,760,20],[462,448,690,22],[385,381,60,16],[710,86,130,18],[710,208,140,20],[738,280,18,170],[1003,280,18,170],[1170,280,22,170],[815,130,140,50],[1050,22,100,26]])}
  ${rr(T,[[1164,84,60,22,10],[1164,208,60,22,10],[1106,260,60,30,10]])}
  <path d="M399 397h45M399 463h45" stroke="#2d8583" stroke-width="3"/>
  ${rs(G,[[410,41,30,10],[660,41,32,10],[790,41,40,10],[826,100,10,42],[918,100,10,42],[918,175,10,40],[830,212,38,11],[410,262,30,10],[660,262,32,10],[790,262,40,10]])}
  ${dots([[410,46],[656,46],[789,46],[834,46],[831,97],[831,141],[923,97],[923,141],[923,172],[923,216],[831,218],[406,267],[656,267],[789,267],[834,267],[877,40],[877,270],[877,308],[1018,42],[1018,270],[1018,308]])}
  ${door(['M411 50Q415 78 440 90','M655 50Q662 82 692 92','M789 50Q796 82 830 92','M408 262Q412 232 440 224','M657 262Q662 232 692 224','M789 262Q794 232 830 224','M834 272Q840 308 877 308Q915 308 920 272M834 272h86','M834 22Q840 40 877 40Q915 40 920 22M834 42h86','M840 140Q860 140 868 120M890 140Q910 130 915 110','M1050 272Q1062 290 1048 306'])}
  ${rs('#fff',[[845,30,20,5],[890,33,20,5],[825,52,6,24],[840,97,24,8],[890,96,24,6],[825,230,6,24],[890,204,24,6],[848,268,18,5],[890,268,20,5],[1088,60,25,6],[1092,240,27,6],[1173,57,24,6],[1176,237,24,6]])}
  ${rs(P,[[465,24,48,12],[462,274,48,12],[368,331,8,12],[462,120,230,3],[742,96,5,122],[668,128,24,3],[668,152,24,3],[668,128,4,48],[795,121,20,50],[952,124,10,56]])}
  ${fixture(532,128)}${fixture(532,164)}${fixture(750,136)}${fixture(750,158)}${bath(458,122)}${bath(458,158)}${bath(935,97)}${bath(935,202)}
  <path d="M715 104h24v32h-24zM727 104v32M715 118h24M815 104h14v30M845 196v20M860 196v20M840 206h26" stroke="#85888c" fill="none" stroke-width="3"/>
  ${rr(C,[[462,362,23,44],[719,358,36,48,8],[470,140,21,32],[711,141,35,33,2],[1004,370,50,36,8],[1040,82,90,150,12]])}
  <path fill="#212830" d="M1050 98h60v116h-60z"/>
  ${rs(P,[[1050,102,62,5],[1050,207,62,5],[1113,130,12,32]])}<path d="M1052 207q27-18 54 0" stroke="${P}" stroke-width="4" fill="none"/>
  ${rr(T,[[1110,92,16,40,8],[1110,160,16,58,8]])}${rs('#ff0',[[1110,137,4,25]])}${rs(O,[[1065,123,12,42],[1125,136,12,4]])}
  ${note([[399,108,36],[399,159,32],[534,84,42],[543,195,42],[750,99,54],[747,198,32],[980,60,30],[980,222,30],[525,360,36,48],[786,360,30,45],[918,357,44,44],[1074,351,30,45],[399,408,26],[890,108,20]])}
  <path d="M546 456h86v8h-86zM583 464h14v8h-14zM588 472h4v7h-4z" fill="#4f9b98"/><path d="M546 456h86v9h-86z" fill="none" stroke="${P}" stroke-width="2"/>
  ${win(784,61)}${win(916,62)}${win(1074,62)}
  <path d="M279 21V463M298 21V463M319 21V463M276 460H342M318 89h30M318 146h18M294 217h36M318 392h30M296 304h22M296 436h24M294 46h12M294 123h12M294 264h12M294 357h14" stroke="#ddd" stroke-width="3.500" fill="none"/>
  ${rs('#fff',[[290,21,11,6],[288,60,11,9],[288,82,12,10],[290,97,11,14],[309,108,9,15],[270,138,9,21],[288,144,12,18],[309,171,9,9],[286,194,11,9],[289,213,13,9],[285,234,12,12],[285,276,13,12],[309,294,9,15],[285,320,13,16],[285,369,13,9],[285,408,12,9],[309,417,9,15],[285,441,12,9]])}
  </g>`;
  const right=`<g transform="translate(780 220) scale(.33333)">
  ${rs(T,[[30,29,90,20],[148,29,560,20],[150,86,160,18],[150,210,160,18],[380,96,80,130],[130,266,180,18],[340,266,360,18],[520,148,220,18],[30,448,660,18],[455,280,18,170],[330,280,18,170],[152,270,22,190],[690,381,50,16]])}
  ${rr(T,[[144,84,50,20,10],[144,208,50,20,10],[150,24,26,24,10],[212,24,24,30,10],[150,262,26,24,10],[212,258,24,28,10]])}
  <path d="M699 397h40M699 463h40" stroke="#2d8583" stroke-width="3"/>
  <path d="M199 97V218M211 97V218M223 97V218M235 97V218M247 103V218M200 150h62l44 6M200 158h62M262 155L210 97M262 155L240 97M262 155L272 97M262 155L300 105M262 155l45-28M262 155l45 30M262 155l28 55M258 155l-20 60M258 155l-38 62M280 130v55" stroke="#77393d" stroke-width="3" fill="none"/>
  ${rs(O,[[189,99,50,8],[255,95,9,9],[276,98,9,9],[298,108,9,9],[204,138,48,9],[228,204,36,4],[281,201,9,5]])}
  ${rs(G,[[464,21,10,20],[527,41,26,10],[700,41,28,10],[367,93,9,38],[482,93,9,38],[372,176,9,38],[484,178,9,30],[464,272,10,36],[527,262,26,10],[700,262,28,10]])}
  ${dots([[469,42],[553,45],[729,45],[372,93],[372,130],[487,93],[487,130],[378,174],[376,216],[488,180],[469,270],[469,308],[552,267],[729,267]])}
  ${door(['M553 50Q548 84 520 92','M729 50Q724 78 699 90','M552 262Q545 230 520 224','M729 262Q720 230 699 224','M474 306Q496 302 502 285','M30 40h6V22','M296 40h12M298 40l8-18','M450 110l8-14h28M452 200q0 14 6 14h24','M295 280q5 12 12 20','M40 272q0 16-10 24'])}
  ${rs('#fff',[[69,60,24,6],[153,57,24,6],[72,240,27,6],[156,237,27,6],[477,30,18,6],[345,94,20,5],[458,94,22,5],[345,204,21,6],[462,206,20,5],[474,270,24,5]])}
  ${rs(P,[[628,27,48,12],[627,276,50,12],[520,118,160,4],[439,96,5,122],[762,331,8,13],[520,128,22,3],[520,152,22,3],[540,128,4,48]])}
  ${fixture(576,130)}${fixture(576,165)}${fixture(336,138)}${fixture(336,160)}${fixture(424,138)}${fixture(424,160)}${bath(660,124)}${bath(660,158)}
  ${rr(C,[[457,136,50,42,3],[455,357,36,50,8],[645,138,33,34],[653,362,30,44],[298,370,50,36,8],[22,370,12,36]])}
  ${note([[576,90,42],[579,194,42],[699,111,36],[699,156,32],[54,351,30,45],[210,345,30,45],[369,345,54],[525,348,36,48],[699,408,30],[444,105,36],[444,171,36],[345,102,30],[340,44,8],[340,224,8]])}
  ${win(54,62)}${win(222,60)}${win(363,63)}
  <path d="M532 456h86v8h-86zM567 464h14v8h-14zM572 472h4v7h-4z" fill="#4f9b98"/><path d="M532 456h86v9h-86z" fill="none" stroke="${P}" stroke-width="2"/>
  <path d="M831 21V470M852 21V470M870 21V470M798 466H874M800 223h36M798 398h36M822 94h14M812 166h22M832 440h20M842 49h14M842 223h12M842 362h12" stroke="#ddd" stroke-width="3.500" fill="none"/>
  ${rs('#fff',[[852,21,11,8],[852,63,12,9],[852,84,11,9],[852,98,11,13],[831,120,12,14],[869,147,13,21],[850,147,12,14],[852,195,10,9],[852,230,10,8],[852,279,9,12],[831,300,12,15],[852,320,9,15],[850,372,9,12],[831,419,12,15],[850,405,8,9],[852,444,10,12]])}
  </g>`;
  const dims=`<path d="M573 389.500H1026M573 396.500H1026M573 402H1026" stroke="#a8abaf" stroke-width="1.800"/>
  <path d="M615.500 389v8M666.500 383v6M697.500 389v8M708.500 381v8M727.500 389v8M817.500 381v8M862.500 380v9" stroke="#ddd" stroke-width="1.500"/>`+
  rs('#fff',[[578,388,5,4],[626,388,6,4],[626,395,6,4],[658,395,6,4],[685,388,5,4],[686,395,5,4],[710,395,5,4],[744,388,6,4],[746,395,5,4],[799,388,5,4],[792,395,4,4],[798,401,7,4],[837,388,6,4],[842,395,6,4],[864,395,6,4],[921,395,6,4],[956,388,6,4],[1002,395,4,4],[1018,388,5,4],[642,396,2,2],[679,396,2,2],[977,396,2,2],[594,395,1,4]]);
  return `<svg class="model" width="100%" height="100%" aria-hidden="true"><g transform="translate(0 -227)">
  <path d="${minor}" stroke="#252c36"/><path d="${major}" stroke="#2d3442"/>
  ${left}${right}${dims}
  <path d="M451 279.500H1082v5.500H451z" fill="#ccc"/><path d="M446 282l5-6 4 3v6l-4 1zM1088 282l-5-6-4 3v6l4 2z" fill="#ccc"/>
  ${rs(T,[[565,227,8,752],[586,227,8,752],[670,227,7,752],[729,227,7,752],[761,227,7,752]])}
  ${rr(C,[[564,565,471,9,3],[564,612,471,10,3],[679,612,11,15,4],[930,612,12,15,4],[586,612,12,15,4],[1001,612,12,15,4]])}
  ${rs(T,[[588,227,6,752],[670,227,7,752],[729,227,7,752],[761,227,7,752],[909,227,7,752],[947,227,7,752],[1005,227,8,752],[1026,227,8,752]])}
  <path d="M594 676H1005" stroke="#0e79a8" stroke-width="2"/>
  ${rs(T,[[670,600,7,100],[729,600,7,100],[761,600,7,100],[909,670,7,20],[947,670,7,20]])}
  <path d="M677.500 619v57M686.500 619v57" stroke="#7f7f48"/><path d="M934 619v57M943 619v57" stroke="#6a6c46" stroke-width="2"/>
  <path d="M771 622v54" stroke="#8f9296" stroke-width="2"/><path d="M772.500 622v54M812.500 622v54M814.500 622v54M820.500 622v54" stroke="#eee"/>
  ${rs(C,[[779,227,11,752],[882,227,12,752],[880,620,4,57]])}
  <path d="M818 227h5v173h-5z" fill="#ccc"/><path d="M814 402l3-4h7l3 4-6 5z" fill="#ccc"/>
  <path d="M1204.500 227V868M868 531.500H1541" stroke="#f2f2f2"/><path d="M1196.500 523.500h16v16h-16z" fill="#212830" stroke="#f2f2f2"/>
  </g></svg>
  <svg class="ucs" width="110" height="100" aria-hidden="true"><g fill="none" stroke="#f2f2f2"><path d="M10.500 31V93.500M10 93.500H73"/><path d="M5.500 87.500h11v11h-11z"/></g><g fill="#f2f2f2" font-family="Open Sans" font-weight="300" font-size="21"><text x="13" y="27">Y</text><text x="78" y="92">X</text></g></svg>`;
}

define('view-cube',`svg{display:block;overflow:visible}button{display:flex;align-items:center;justify-content:space-between;width:56px;height:20px;padding:0 5px 0 4px;margin:23px auto 0;border-radius:5px;background:#9294a2;color:#5c5f6b;font:13px/20px "Liberation Sans",sans-serif}`,
`<svg width="136" height="144" viewBox="0 0 136 144"><circle cx="68" cy="73" r="57" fill="none" stroke="#474c54" stroke-width="13"/><path d="M40 45h56v55H40z" fill="#abadaf"/><path d="M51 56h34v34H51z" fill="#9c9ea8"/><g fill="#aeb0b3" font-family="Liberation Sans" font-weight="700" font-size="22" text-anchor="middle"><text x="68" y="22">N</text><text x="68" y="141">S</text><text x="9" y="81">W</text><text x="128" y="81">E</text></g><text x="68" y="78" text-anchor="middle" font-family="Open Sans" font-weight="700" font-size="12" fill="#4d535c">TOP</text></svg>
<button>WCS<svg width="10" height="6"><path d="M0 0h10L5 6z" fill="#a9abb6"/></svg></button>`);

const nav={
 wheel:`<path d="M15 1h12v13a13 13 0 1 1-12-13z"/><circle cx="14" cy="14" r="7.500"/><path d="M4 23q10-6 20 0"/>`,
 hand:`<path d="M8 27q-6-8-7-12 3-1 6 4L5 6q2-2 4 0l2 7V3q2-3 4 0l1 10 2-9q2-2 4 0l-1 11 3-5q2 0 2 2l-4 10-4 6z"/>`,
 zoom:`<path d="M2 2l18 18M19 2L2 19"/><path d="M1 1h5M1 1v5M20 1h-5M20 1v5M1 19v-5M1 19h5" stroke-width="2.500"/><circle cx="20" cy="18" r="6" fill="#5a5e66"/><path d="M24 22l5 5" stroke-width="3"/>`,
 orbit:`<ellipse cx="14" cy="16" rx="13" ry="5"/><path d="M11 27V7H9l5-7 5 7h-2v20z" fill="#5a5e66"/><path d="M4 20l7-2v6z" fill="#3f444c"/>`,
 show:`<path d="M1 1h7v8H1zM11 1h7v8h-7zM21 1h7v8h-7zM1 13h20v17H1z"/><path d="M7 17l9 5-9 4z" fill="#3f444c"/>`};
define('nav-bar',`:host{display:flex;flex-direction:column;align-items:center;background:#5a5e66;border-radius:4px;width:40px;height:260px;padding:2px 4px;outline:1px solid #1a2028}
svg{display:block}button{display:flex}.e{align-self:flex-end}hr{width:36px;margin:6px 0 5px;border:0;border-top:1px solid #676a70}
.a{margin:7px 0 0}.s{height:7px}`,
(()=>{const b=(n,h,l)=>`<button aria-label="${l}"><svg width="30" height="${h}" fill="none" stroke="#3f444c" stroke-width="1.500">${nav[n]}</svg></button>`,a=`<svg class="a" width="8" height="4"><path d="M0 0h8L4 4z" fill="#3f444c"/></svg>`,e=p=>`<svg class="e" width="10" height="10" fill="none" stroke="#444950" stroke-width="1.300"><circle cx="5" cy="5" r="4.300"/><path d="${p}"/></svg>`,s='<div class="s"></div>';
return e('M3 3l4 4M7 3L3 7')+s+b('wheel',28,'Wheel')+a+`<hr>`+b('hand',29,'Pan')+s+b('zoom',28,'Zoom')+a+s+b('orbit',28,'Orbit')+a+`<hr>`+b('show',31,'Motion')+`<div style="flex:1"></div>`+e('M3 5h4')})());

define('command-line',`:host{display:flex;height:33px}
.h{display:flex;align-items:center;gap:9px;width:72px;padding-left:5px;background:#292e3b;border-radius:3px 0 0 3px}
.h button{display:flex}.h button+button{margin-left:5px}
.f{flex:1;display:flex;align-items:center;gap:2px;background:rgba(255,255,255,.7);border-radius:3px;padding:0 5px;margin-top:1px}
input{flex:1;height:32px;margin-left:7px;padding:0;outline:0;font:italic 15px/32px "DejaVu Sans Mono",monospace}
input::placeholder{color:#5b5e62;opacity:1}`,
`<div class="h">${I('grip')}${btn('x','Close')}${btn('wrench','Customize')}</div><div class="f">${I('prompt')}${I('tridark')}<input aria-label="Command" placeholder="Type a command">${I('updark')}</div>`);

define('model-view',`:host{position:relative;flex:1;min-height:0;overflow:hidden;background:#212830}
.model{position:absolute;left:0;top:0}
.ucs{position:absolute;left:10px;bottom:14px;overflow:visible}
.vp{position:absolute;left:4px;top:6px}
.mdi{position:absolute;right:12px;top:11px;display:flex;gap:12px}.mdi button{display:flex}
view-cube{position:absolute;right:20px;top:43px}
nav-bar{position:absolute;right:3px;top:259px}
command-line{position:absolute;left:395px;right:396px;bottom:0}`,
`${drawing()}<span class="vp">[−][Top][2D Wireframe]</span>
<div class="mdi"><button aria-label="Minimize drawing"><svg width="13" height="13"><path d="M0 9h13v4H0z" fill="#eee"/></svg></button><button aria-label="Restore drawing"><svg width="13" height="13" fill="none" stroke="#eee"><path d="M1.500 4.500h7v7h-7z" stroke-width="3"/><path d="M4 1h8v9" stroke-width="2"/></svg></button><button aria-label="Close drawing"><svg width="13" height="13"><path d="M2 2l9 10M11 2L2 12" stroke="#eee" stroke-width="3"/></svg></button></div>
<view-cube></view-cube><nav-bar></nav-bar><command-line></command-line>`);

/* ---------- status bar ---------- */
define('status-bar',`:host{display:flex;gap:2px;height:31px;padding-right:2px}
.g{display:flex;background:#3b4453;margin-right:1px}
button{display:flex;align-items:center;justify-content:center;height:31px}
.on{background:#5f8dc0}.on+.on{margin-left:2px}
.sc{gap:4px;width:38px}`,
(()=>{const b=(n,w,c='')=>`<button class="${c}" aria-label="${n}" style="width:${w}px">${I(n)}</button>`,g=s=>`<div class="g">${s}</div>`;
return g(`<button style="width:59px">MODEL</button>`)+g(b('grid',29,'on')+b('snap',31)+b('trib',19))+g(b('ortho',29,'on')+b('polar',32)+b('trib',17)+b('iso',34)+b('trib',18))+g(b('track',31)+b('osnap',28,'on')+b('trib',21))+g(b('an1',28,'on')+b('an2',28,'on')+b('an3',33)+`<button class="sc">1:1${I('trib')}</button>`)+g(b('gear',29)+b('trib',20))+g(b('cross',29))+g(b('shapes',30))+g(b('perf',38))+g(b('full',30))+g(b('burger',29))})());

/* ---------- task bar ---------- */
define('task-bar',`:host{display:grid;grid-template-columns:1fr auto 1fr;align-items:center;height:60px;padding-bottom:2px;background:linear-gradient(90deg,#1b2429,#1d2228 60%,#1e2026);border-top:1px solid #484b4f}
.apps{display:flex;grid-column:2}
.apps button{position:relative;display:flex;align-items:center;justify-content:center;width:50px;height:50px;margin:0 3px 0 2px;border-radius:5px}
.r::after,.sel::after{content:"";position:absolute;bottom:0;left:21px;width:8px;height:4px;border-radius:2px;background:#94979a}
.apps .sel{background:#2b3036;border:1px solid #363b40}
.sel::after{left:14px;width:20px;background:#4cc2ff}
.tray{display:flex;align-items:center;justify-content:flex-end;gap:10px;padding-right:25px}
.tray button{display:flex}
.tray .ch{margin-right:13px}
.tray .time{display:block;text-align:right;line-height:20px;margin-left:10px}`,
`<div class="apps">${[['win'],['tsearch'],['folder'],['fox'],['brave','r'],['wa','r'],['code'],['acad','sel'],['note','r'],['photo','r']].map(([n,c=''])=>btn(n,n,c)).join('')}</div>
<div class="tray">${btn('chev','Hidden icons','ch')}${btn('wifi','Network')}${btn('vol','Volume')}${btn('batt','Battery')}<button class="time">16:52<br>11.07.2024</button>${btn('bell','Notifications')}</div>`);

define('cad-app',`:host{display:flex;flex-direction:column;height:100vh}
.band{height:5px;background:#3b4453}
.bot{display:flex;justify-content:space-between;height:36px;background:#222933}
status-bar{margin-top:2px}`,
`<title-bar></title-bar><ribbon-tabs></ribbon-tabs><cad-ribbon></cad-ribbon><file-tabs></file-tabs><div class="band"></div><model-view></model-view><div class="band"></div><div class="bot"><layout-tabs></layout-tabs><status-bar></status-bar></div><task-bar></task-bar>`);
</script>
</body>
</html>
